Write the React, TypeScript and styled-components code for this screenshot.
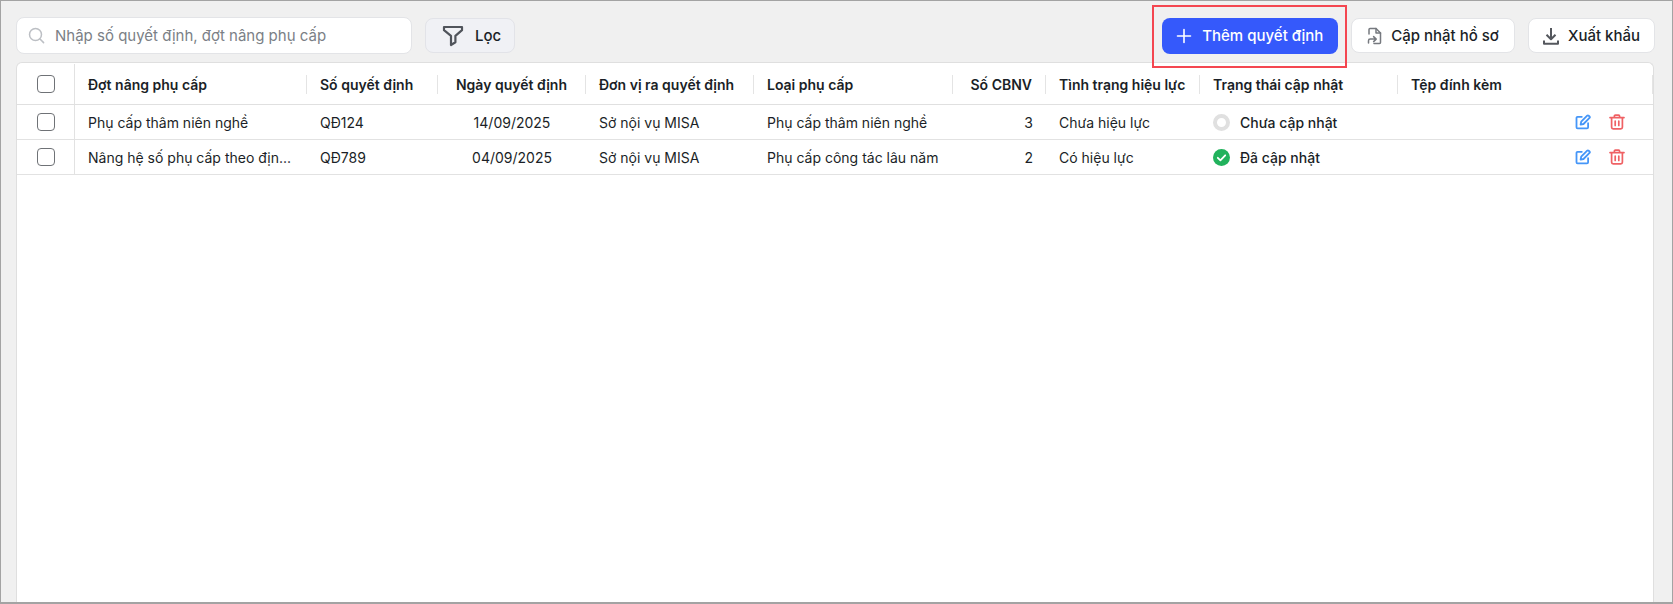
import React, { FunctionComponent } from "react"
import styled, { createGlobalStyle } from "styled-components"

const GlobalStyle = createGlobalStyle`
  html, body {
    margin: 0;
    padding: 0;
    background: #f0f0f0;
  }
  body {
    font-family: Inter, "Noto Sans", sans-serif;
    font-size: 14px;
    color: #1b1f27;
  }
`

const columns = "58px 232px 131px 148px 168px 199px 93px 154px 198px 1fr"

interface rowData {
  batch: string
  number: string
  date: string
  unit: string
  type: string
  count: number
  validity: string
  status: string
  done: boolean
}

const rows: rowData[] = [
  {
    batch: "Phụ cấp thâm niên nghề",
    number: "QĐ124",
    date: "14/09/2025",
    unit: "Sở nội vụ MISA",
    type: "Phụ cấp thâm niên nghề",
    count: 3,
    validity: "Chưa hiệu lực",
    status: "Chưa cập nhật",
    done: false,
  },
  {
    batch: "Nâng hệ số phụ cấp theo địn...",
    number: "QĐ789",
    date: "04/09/2025",
    unit: "Sở nội vụ MISA",
    type: "Phụ cấp công tác lâu năm",
    count: 2,
    validity: "Có hiệu lực",
    status: "Đã cập nhật",
    done: true,
  },
]

const SearchIcon = () => (
  <svg width="17" height="17" viewBox="0 0 17 17" fill="none" stroke="#bcbfc4" strokeWidth="1.5" strokeLinecap="round">
    <circle cx="7.5" cy="7.5" r="6" />
    <path d="M12 12l3.6 3.6" />
  </svg>
)

const FilterIcon = () => (
  <svg width="22" height="22" viewBox="0 0 22 22" fill="none" stroke="#50545b" strokeWidth="2.2" strokeLinejoin="round">
    <path d="M2 2h18v3.2l-6.6 5.6v6.4L9 20v-9.2L2 5.2z" />
  </svg>
)

const PlusIcon = () => (
  <svg width="16" height="16" viewBox="0 0 16 16" fill="none" stroke="#ffffff" strokeWidth="1.6" strokeLinecap="round">
    <path d="M8 1.5v13M1.5 8h13" />
  </svg>
)

const ImportIcon = () => (
  <svg width="15" height="18" viewBox="0 0 15 18" fill="none" stroke="#76797f" strokeWidth="1.5" strokeLinejoin="round" strokeLinecap="round">
    <path d="M2 7V2.5c0-.6.4-1 1-1h6L13.5 6v9.5c0 .6-.4 1-1 1H7" />
    <path d="M9 1.5V6h4.5" />
    <path d="M1.5 16v-2.2c0-1 .7-1.7 1.7-1.7H9M6.6 9.6 9.2 12.1 6.6 14.6" />
  </svg>
)

const DownloadIcon = () => (
  <svg width="16" height="18" viewBox="0 0 16 18" fill="none" stroke="#54575d" strokeWidth="2" strokeLinejoin="round">
    <path d="M8 1v10.5M3.5 7.8 8 12.3l4.5-4.5" />
    <path d="M1 13.5v3.2h14v-3.2" />
  </svg>
)

const EditIcon = () => (
  <svg width="16" height="16" viewBox="0 0 16 16" fill="none" stroke="#4596f8" strokeWidth="1.8" strokeLinecap="round" strokeLinejoin="round">
    <path d="M6.8 2.8H2.6c-.7 0-1.1.4-1.1 1.1v9.4c0 .7.4 1.1 1.1 1.1H12c.7 0 1.1-.4 1.1-1.1V9.2" />
    <path d="M5.6 10.6l.6-2.9L12.2 1.6c.4-.4 1-.4 1.4 0l.9.9c.4.4.4 1 0 1.4L8.5 10z" />
  </svg>
)

const TrashIcon = () => (
  <svg width="16" height="16" viewBox="0 0 16 16" fill="none" stroke="#ef6164" strokeWidth="1.7" strokeLinecap="round" strokeLinejoin="round">
    <path d="M1 3.6h14M5.4 3.4V2.2c0-.6.4-1 1-1h3.2c.6 0 1 .4 1 1v1.2" />
    <path d="M2.6 3.8v9.4c0 1 .7 1.6 1.6 1.6h7.6c1 0 1.6-.6 1.6-1.6V3.8" />
    <path d="M6.2 7.2v4.2M9.8 7.2v4.2" />
  </svg>
)

const CheckedIcon = () => (
  <svg width="17" height="17" viewBox="0 0 17 17">
    <circle cx="8.5" cy="8.5" r="8.5" fill="#21b25c" />
    <path d="M4.8 8.8l2.6 2.5 4.8-5" fill="none" stroke="#ffffff" strokeWidth="1.8" strokeLinecap="round" strokeLinejoin="round" />
  </svg>
)

const App: FunctionComponent = () => {
  return (
    <Frame>
      <GlobalStyle />
      <Toolbar>
        <SearchBox>
          <SearchIcon />
          <SearchText>Nhập số quyết định, đợt nâng phụ cấp</SearchText>
        </SearchBox>
        <FilterButton>
          <FilterIcon />
          Lọc
        </FilterButton>
        <Actions>
          <Highlight>
            <PrimaryButton>
              <PlusIcon />
              Thêm quyết định
            </PrimaryButton>
          </Highlight>
          <OutlineButton>
            <ImportIcon />
            Cập nhật hồ sơ
          </OutlineButton>
          <ExportButton>
            <DownloadIcon />
            Xuất khẩu
          </ExportButton>
        </Actions>
      </Toolbar>
      <TablePanel>
        <HeaderRow>
          <CheckCell>
            <Checkbox />
          </CheckCell>
          <HeaderCell>Đợt nâng phụ cấp</HeaderCell>
          <HeaderCell>Số quyết định</HeaderCell>
          <HeaderCell $align="center">Ngày quyết định</HeaderCell>
          <HeaderCell>Đơn vị ra quyết định</HeaderCell>
          <HeaderCell>Loại phụ cấp</HeaderCell>
          <HeaderCell $align="right">Số CBNV</HeaderCell>
          <HeaderCell>Tình trạng hiệu lực</HeaderCell>
          <HeaderCell>Trạng thái cập nhật</HeaderCell>
          <HeaderCell>Tệp đính kèm</HeaderCell>
        </HeaderRow>
        {rows.map(row => (
          <BodyRow key={row.number}>
            <CheckCell>
              <Checkbox />
            </CheckCell>
            <BodyCell>{row.batch}</BodyCell>
            <BodyCell>{row.number}</BodyCell>
            <BodyCell $align="center">{row.date}</BodyCell>
            <BodyCell>{row.unit}</BodyCell>
            <BodyCell>{row.type}</BodyCell>
            <BodyCell $align="right">{row.count}</BodyCell>
            <BodyCell>{row.validity}</BodyCell>
            <StatusCell>
              {row.done ? <CheckedIcon /> : <PendingDot />}
              {row.status}
            </StatusCell>
            <RowActions>
              <IconButton>
                <EditIcon />
              </IconButton>
              <IconButton>
                <TrashIcon />
              </IconButton>
            </RowActions>
          </BodyRow>
        ))}
      </TablePanel>
    </Frame>
  )
}

const Frame = styled.div`
  box-sizing: border-box;
  width: 1673px;
  height: 604px;
  padding: 16px 18px 0 15px;
  display: flex;
  flex-direction: column;
  background: #f0f0f0;
  border: 1px solid #a3a3a3;
  border-bottom-width: 2px;
  overflow: hidden;
`
const Toolbar = styled.div`
  display: flex;
  align-items: center;
  height: 37px;
  flex-shrink: 0;
`
const SearchBox = styled.div`
  box-sizing: border-box;
  width: 396px;
  height: 37px;
  padding: 0 11px;
  display: flex;
  align-items: center;
  gap: 10px;
  background: #ffffff;
  border: 1px solid #e3e4e7;
  border-radius: 8px;
`
const SearchText = styled.span`
  color: #7b7f86;
  font-size: 15px;
`
const Button = styled.div`
  box-sizing: border-box;
  height: 35px;
  display: flex;
  align-items: center;
  font-size: 15px;
  font-weight: 500;
  white-space: nowrap;
  border-radius: 8px;
`
const FilterButton = styled(Button)`
  margin-left: 13px;
  width: 90px;
  padding-left: 16px;
  gap: 11px;
  background: #f0f1f5;
  border: 1px solid #e2e3e8;
`
const Actions = styled.div`
  margin-left: auto;
  margin-right: -1px;
  display: flex;
  align-items: center;
  gap: 13px;
`
const Highlight = styled.div`
  position: relative;
  &::after {
    content: "";
    position: absolute;
    inset: -13px -9px -14px -10px;
    border: 2px solid #f44650;
    pointer-events: none;
  }
`
const PrimaryButton = styled(Button)`
  width: 176px;
  height: 36px;
  padding-left: 14px;
  gap: 10px;
  color: #ffffff;
  background: #3559fb;
`
const OutlineButton = styled(Button)`
  padding: 0 15px 0 15px;
  gap: 9px;
  background: #ffffff;
  border: 1px solid #e3e4e7;
`
const ExportButton = styled(OutlineButton)`
  padding: 0 14px;
`
const TablePanel = styled.div`
  margin-top: 8px;
  flex: 1;
  background: #ffffff;
  border: 1px solid #dfdfdf;
  border-bottom: none;
  border-radius: 6px 6px 0 0;
`
const HeaderRow = styled.div`
  box-sizing: border-box;
  display: grid;
  grid-template-columns: ${columns};
  align-items: center;
  height: 42px;
  padding-top: 1px;
  border-bottom: 1px solid #e0e0e0;
`
const BodyRow = styled.div`
  display: grid;
  grid-template-columns: ${columns};
  align-items: center;
  height: 34px;
  border-bottom: 1px solid #e2e2e2;
`
const CheckCell = styled.div`
  align-self: stretch;
  display: flex;
  align-items: center;
  justify-content: center;
  border-right: 1px solid #e2e2e2;
`
const Checkbox = styled.div`
  box-sizing: border-box;
  width: 18px;
  height: 18px;
  background: #ffffff;
  border: 1px solid #6f7276;
  border-radius: 4px;
`
const alignments = { left: "flex-start", center: "center", right: "flex-end" }
const HeaderCell = styled.div<{ $align?: "left" | "center" | "right" }>`
  box-sizing: border-box;
  height: 19px;
  padding: 0 13px;
  display: flex;
  align-items: center;
  justify-content: ${props => alignments[props.$align || "left"]};
  font-size: 14px;
  font-weight: 600;
  white-space: nowrap;
  border-right: 1px solid #e4e4e4;
`
const BodyCell = styled.div<{ $align?: "left" | "center" | "right" }>`
  padding: 0 13px;
  white-space: nowrap;
  font-size: 14px;
  text-align: ${props => props.$align || "left"};
`
const StatusCell = styled.div`
  padding: 0 13px;
  display: flex;
  align-items: center;
  gap: 10px;
  font-size: 14px;
  font-weight: 500;
`
const PendingDot = styled.span`
  box-sizing: border-box;
  width: 17px;
  height: 17px;
  background: #ffffff;
  border: 4.5px solid #e0e0e0;
  border-radius: 50%;
`
const RowActions = styled.div`
  display: flex;
  justify-content: flex-end;
  gap: 18px;
  padding-right: 28px;
`
const IconButton = styled.div`
  width: 16px;
  height: 16px;
  display: flex;
`

export default App
